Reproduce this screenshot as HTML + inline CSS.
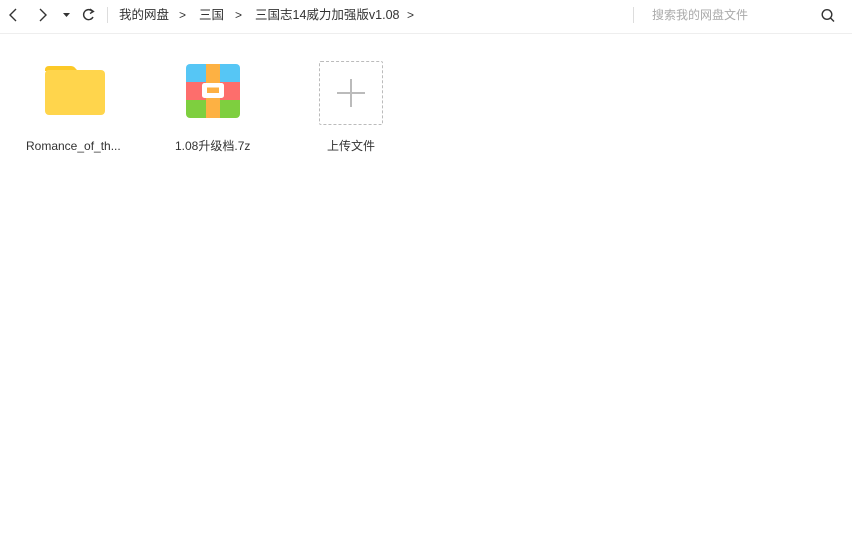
<!DOCTYPE html>
<html><head><meta charset="utf-8"><style>
body{margin:0;width:852px;height:538px;background:#fff;font-family:"Liberation Sans","Noto Sans CJK SC",sans-serif;color:#333;position:relative;overflow:hidden}
.a{position:absolute}
.t{font-size:12px;white-space:nowrap;line-height:16px;height:16px}
</style></head><body>
<div class="a" style="left:0;top:33px;width:852px;height:1px;background:#eee"></div>
<svg class="a" style="left:0;top:0" width="110" height="33">
<path d="M16 9 L10 15 L16 21" fill="none" stroke="#333" stroke-width="1.4"/>
<path d="M40 9 L46 15 L40 21" fill="none" stroke="#333" stroke-width="1.4"/>
<path d="M63 13 L70 13 L66.5 17 Z" fill="#333"/>
<path d="M92.5 11.5 A5 5 0 1 0 93 17" fill="none" stroke="#333" stroke-width="1.4"/>
<path d="M90 9 L93.5 11.5 L90 13.5" fill="none" stroke="#333" stroke-width="1.3"/>
<line x1="107.5" y1="7" x2="107.5" y2="23" stroke="#ddd"/>
</svg>
<div class="a t" style="left:119px;top:7px;font-size:12.5px">我的网盘</div>
<div class="a t" style="left:179px;top:7px">&gt;</div>
<div class="a t" style="left:199px;top:7px;font-size:12.5px">三国</div>
<div class="a t" style="left:235px;top:7px">&gt;</div>
<div class="a t" style="left:255px;top:7px;font-size:12.5px">三国志14威力加强版v1.08</div>
<div class="a t" style="left:407px;top:7px">&gt;</div>
<div class="a" style="left:633px;top:7px;width:1px;height:16px;background:#ddd"></div>
<div class="a t" style="left:652px;top:7px;color:#aaa">搜索我的网盘文件</div>
<svg class="a" style="left:820px;top:8px" width="16" height="16"><circle cx="7" cy="6.5" r="4.8" fill="none" stroke="#333" stroke-width="1.4"/><line x1="10.5" y1="10" x2="14" y2="13.5" stroke="#333" stroke-width="1.4"/></svg>
<svg class="a" style="left:45px;top:66px" width="61" height="50">
<path d="M0 4 Q0 0 4 0 L26 0 Q29 0 31 3 L33 5 L0 5 Z" fill="#fcc927"/>
<rect x="0" y="4" width="60" height="45" rx="4" fill="#ffd54c"/>
</svg>
<svg class="a" style="left:186px;top:64px" width="54" height="54">
<clipPath id="c"><rect width="54" height="54" rx="4"/></clipPath>
<g clip-path="url(#c)">
<rect width="54" height="18" fill="#56c6f5"/><rect y="18" width="54" height="18" fill="#fd6e6c"/><rect y="36" width="54" height="18" fill="#7ecf3f"/>
<rect x="20" width="14" height="54" fill="#fdb143"/>
<rect x="16" y="19" width="22" height="15" rx="2.5" fill="#fff"/>
<rect x="21" y="23.5" width="12" height="5.5" fill="#fdb143"/>
</g></svg>
<div class="a" style="left:319px;top:61px;width:62px;height:62px;border:1px dashed #bbb;border-radius:2px"></div>
<div class="a" style="left:337px;top:92px;width:28px;height:2px;background:#bbb"></div>
<div class="a" style="left:350px;top:79px;width:2px;height:28px;background:#bbb"></div>
<div class="a t" style="left:26px;top:138px">Romance_of_th...</div>
<div class="a t" style="left:175px;top:138px">1.08升级档.7z</div>
<div class="a t" style="left:327px;top:138px">上传文件</div>
</body></html>
